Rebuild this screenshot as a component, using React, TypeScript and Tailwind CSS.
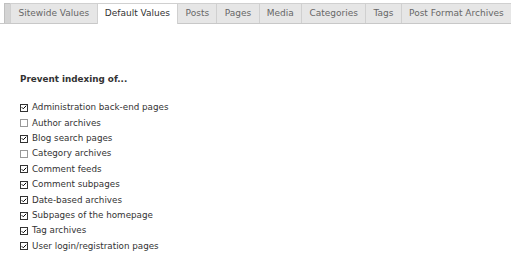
import { Check } from "lucide-react";

const tabs = [
  "Sitewide Values",
  "Default Values",
  "Posts",
  "Pages",
  "Media",
  "Categories",
  "Tags",
  "Post Format Archives",
];

const items: [string, boolean][] = [
  ["Administration back-end pages", true],
  ["Author archives", false],
  ["Blog search pages", true],
  ["Category archives", false],
  ["Comment feeds", true],
  ["Comment subpages", true],
  ["Date-based archives", true],
  ["Subpages of the homepage", true],
  ["Tag archives", true],
  ["User login/registration pages", true],
];

export default function App() {
  return (
    <div className="w-[511px] h-[255px] bg-white overflow-hidden text-[9px] text-[#444]" style={{ fontFamily: '"DejaVu Sans", Verdana, sans-serif' }}>
      <div className="flex items-end pt-[3px] pl-[4px] border-b border-[#c8c8c8] h-[24px]">
        <div className="w-[7px] h-[20px] bg-[#d4d4d4] border-t border-l border-[#c0c0c0]" />
        {tabs.map((t) => {
          const active = t === "Default Values";
          return (
            <div
              key={t}
              className={`h-[20px] px-[7.3px] flex items-center border border-b-0 border-[#d0d0d0] -mr-px whitespace-nowrap ${
                active ? "bg-white text-[#333] h-[21px] -mb-px relative z-10" : "bg-[#e6e6e6] text-[#666]"
              }`}
            >
              {t}
            </div>
          );
        })}
      </div>
      <div className="pl-[20px] pt-[49px]">
        <div className="font-bold text-[#333] text-[8.8px]">Prevent indexing of...</div>
        <div className="mt-[14px] flex flex-col">
          {items.map(([label, on]) => (
            <div key={label} className="flex items-center h-[15.4px] gap-[4px]">
              <span className={`w-[8px] h-[8px] border flex items-center justify-center bg-white ${on ? "border-[#333]" : "border-[#999]"}`}>
                {on && <Check className="w-[7px] h-[7px] text-black" strokeWidth={4} />}
              </span>
              <span className="text-[#333] text-[8.75px]">{label}</span>
            </div>
          ))}
        </div>
      </div>
    </div>
  );
}
